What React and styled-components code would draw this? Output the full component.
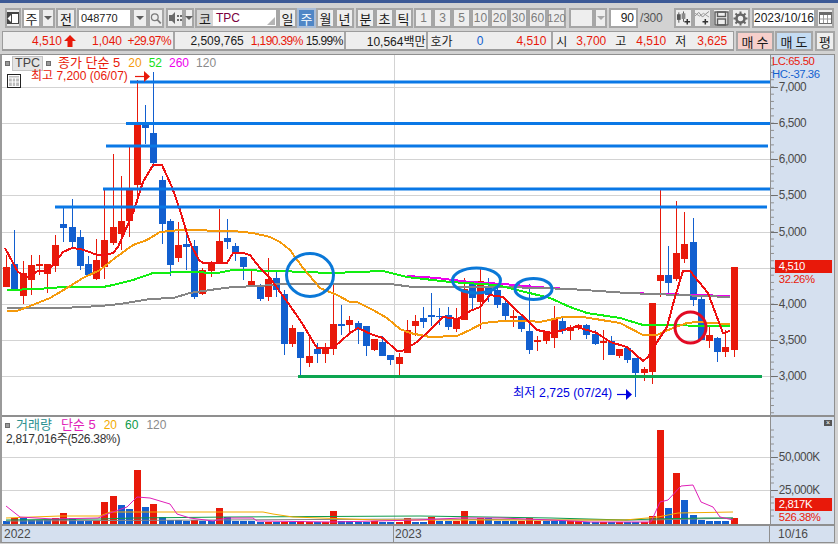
import React from 'react';
import styled, { createGlobalStyle } from 'styled-components';

const RED = '#e8190a';
const BLUE = '#125fcf';
const FONT = '"Liberation Sans", "Noto Sans CJK KR", sans-serif';

const GlobalStyle = createGlobalStyle`
  html, body { margin: 0; padding: 0; background: #d2d2d2; }
  body { font-family: ${FONT}; font-size: 12px; color: #222; }
`;

const Screen = styled.div`
  width: 838px;
  height: 544px;
  overflow: hidden;
  background: #d2d2d2;
  display: flex;
  flex-direction: column;
`;

const TitleStripe = styled.div`
  height: 3px;
  background: #3d5a96;
`;

const Toolbar = styled.div`
  display: flex;
  align-items: stretch;
  height: 20px;
  margin-top: 5px;
  padding-left: 2px;
`;

const ToolButton = styled.div`
  box-sizing: border-box;
  width: ${(p) => p.$w}px;
  margin-left: ${(p) => p.$ml || 0}px;
  display: flex;
  align-items: center;
  justify-content: ${(p) => p.$align || 'center'};
  border: 2px solid ${(p) => (p.$active ? '#a9bcd6' : '#a6a6a6')};
  background: ${(p) => (p.$active ? '#4f86c6' : p.$white ? '#fff' : '#eeeeee')};
  color: ${(p) => (p.$active ? '#fff' : p.$dim ? '#7c7c7c' : '#1a1a1a')};
  font-size: ${(p) => p.$size || 13}px;
  padding: ${(p) => p.$pad || '0'};
  position: relative;
  white-space: nowrap;
`;

const CodeBadge = styled.span`
  width: 16px;
  height: 16px;
  background: #d6d6d6;
  display: flex;
  align-items: center;
  justify-content: center;
  font-size: 13px;
`;

const StockName = styled.span`
  color: #7a0040;
  font-size: 12px;
  margin-left: 3px;
`;

const Corner = styled.span`
  position: absolute;
  right: 1px;
  bottom: 1px;
  width: 0;
  height: 0;
  border-left: 8px solid transparent;
  border-bottom: 8px solid #b5b5b5;
`;

const Caret = styled.span`
  width: 0;
  height: 0;
  border-left: 4px solid transparent;
  border-right: 4px solid transparent;
  border-top: 4px solid ${(p) => p.$color || '#5c5c5c'};
`;

const CountText = styled.span`
  width: 26px;
  margin-left: 2px;
  align-self: center;
  font-size: 12px;
  color: #555;
  letter-spacing: -0.2px;
`;

const InfoBar = styled.div`
  display: flex;
  height: 20px;
  margin-top: 3px;
  padding-left: 2px;
`;

const InfoGroup = styled.div`
  box-sizing: border-box;
  display: flex;
  align-items: center;
  width: 732px;
  border: 1px solid #9c9c9c;
  border-bottom-width: 2px;
  background: #eeeeee;
`;

const InfoCell = styled.div`
  box-sizing: border-box;
  display: flex;
  align-items: center;
  height: 100%;
  width: ${(p) => p.$w}px;
  border-right: ${(p) => (p.$last ? 'none' : '2px solid #a6a6a6')};
  white-space: nowrap;
`;

const Stat = styled.span`
  display: inline-block;
  flex: none;
  width: ${(p) => p.$w}px;
  margin-left: ${(p) => p.$ml || 0}px;
  text-align: ${(p) => (p.$left ? 'left' : 'right')};
  color: ${(p) => p.$color || '#1a1a1a'};
  letter-spacing: ${(p) => (p.$tight ? '-0.6px' : '0')};
  font-size: 12px;
`;

const UpArrowIcon = styled.svg`
  margin-left: 2px;
  flex: none;
`;

const TradeButton = styled.div`
  box-sizing: border-box;
  width: ${(p) => p.$w}px;
  margin-left: ${(p) => p.$ml}px;
  display: flex;
  align-items: center;
  justify-content: center;
  gap: ${(p) => p.$gap || 0}px;
  border: 2px solid #a6a6a6;
  background: ${(p) => p.$bg};
  font-size: 13px;
  color: #1a1a1a;
`;

const ChartFrame = styled.div`
  box-sizing: border-box;
  width: 835px;
  margin-top: 3px;
  height: 489px;
  border: 1px solid #8f8f8f;
  border-left: 2px solid #9a9a9a;
  display: flex;
  flex-direction: column;
  background: #fff;
`;

const Pane = styled.div`
  position: relative;
  display: flex;
  height: ${(p) => p.$h}px;
  border-bottom: ${(p) => (p.$divider ? '2px solid #8f8f8f' : 'none')};
  flex: none;
`;

const Plot = styled.svg`
  display: block;
  width: 768px;
  height: 100%;
  flex: none;
`;

const Axis = styled.svg`
  display: block;
  flex: 1;
  height: 100%;
  background: #d5e0ef;
  border-left: 1px solid #8f8f8f;
`;

const AxisText = styled.text`
  font-family: ${FONT};
  font-size: ${(p) => p.$size || 12}px;
  letter-spacing: -0.45px;
  fill: ${(p) => p.$color || '#4a4a4a'};
`;

const NoteText = styled.text`
  font-family: ${FONT};
  font-size: 12.3px;
  fill: #0000e0;
`;

const Legend = styled.div`
  position: absolute;
  left: ${(p) => p.$x}px;
  top: ${(p) => p.$y}px;
  display: flex;
  align-items: center;
  height: 14px;
  white-space: nowrap;
  font-size: 12px;
`;

const LegendItem = styled.span`
  display: block;
  line-height: 12px;
  color: ${(p) => p.$color};
  margin-left: ${(p) => p.$ml || 0}px;
  font-size: ${(p) => p.$size || 12}px;
  letter-spacing: ${(p) => p.$spacing || 0}px;
`;

const Marker = styled.span`
  width: 5px;
  height: 5px;
  background: #9a9a9a;
  border: 1px solid #6e6e6e;
  box-sizing: border-box;
  margin-left: ${(p) => p.$ml || 0}px;
`;

const NameChip = styled.span`
  box-sizing: border-box;
  width: 31px;
  height: 15px;
  margin-left: 2px;
  background: #e4e4e4;
  border: 1px solid #c4c4c4;
  display: flex;
  align-items: center;
  justify-content: center;
  color: #444;
  font-size: 12.5px;
`;

const GridToggle = styled.span`
  position: absolute;
  left: 5px;
  top: 19px;
  box-sizing: border-box;
  width: 14px;
  height: 14px;
  border: 1px solid #222;
  display: flex;
  align-items: center;
  justify-content: center;
  background: #fff;
`;

const CloseBox = styled.span`
  position: absolute;
  right: 2px;
  top: 3px;
  width: 8px;
  height: 6px;
  background: #555;
  color: #fff;
  font-size: 7px;
  line-height: 6px;
  text-align: center;
`;

const DateRow = styled.div`
  display: flex;
  flex: 1;
  align-items: center;
  background: #d5e0ef;
  border-top: 2px solid #8f8f8f;
  color: #4a4a4a;
  font-size: 12px;
`;

const DateLabel = styled.span`
  box-sizing: border-box;
  width: ${(p) => p.$w}px;
  height: 100%;
  display: flex;
  align-items: center;
  padding-left: ${(p) => p.$pad}px;
  border-right: ${(p) => (p.$edge ? '1px solid #8f8f8f' : 'none')};
`;

// 90 weekly candles, page pixel coords: [colour, body top, body bottom, wick top, wick bottom]
const CANDLES = [
  ['r', 267, 287, 255, 287], ['b', 264, 289, 230, 289], ['r', 273, 296, 261, 304], ['r', 265, 280, 255, 295],
  ['r', 264, 266, 255, 275], ['r', 264, 274, 264, 293], ['r', 245, 266, 235, 272], ['b', 224, 228, 206, 242],
  ['b', 227, 242, 199, 247], ['b', 237, 266, 230, 270], ['b', 264, 275, 256, 276], ['r', 260, 279, 239, 280],
  ['r', 240, 267, 190, 279], ['r', 227, 243, 154, 245], ['r', 221, 234, 176, 250], ['r', 190, 221, 147, 237],
  ['r', 125, 185, 80, 203], ['b', 125, 128, 105, 144], ['b', 133, 163, 72, 167], ['b', 180, 224, 176, 244],
  ['b', 221, 265, 219, 276], ['r', 245, 258, 222, 262], ['b', 244, 247, 234, 270], ['b', 246, 297, 240, 299],
  ['r', 270, 294, 268, 295], ['r', 262, 271, 261, 277], ['r', 241, 262, 209, 263], ['b', 238, 242, 219, 249],
  ['b', 246, 254, 243, 261], ['b', 257, 267, 257, 280], ['r', 281, 286, 269, 286], ['b', 286, 299, 284, 301],
  ['r', 279, 297, 258, 301], ['b', 278, 290, 271, 297], ['b', 294, 344, 290, 355], ['r', 328, 344, 325, 347],
  ['b', 332, 358, 332, 375], ['r', 356, 363, 337, 367], ['b', 349, 354, 343, 363], ['r', 349, 354, 343, 363],
  ['r', 324, 349, 285, 355], ['b', 324, 326, 305, 335], ['r', 320, 325, 316, 334], ['b', 323, 330, 321, 344],
  ['b', 326, 346, 326, 356], ['r', 339, 350, 339, 351], ['b', 342, 356, 336, 356], ['b', 355, 360, 355, 365],
  ['r', 357, 364, 353, 375], ['r', 330, 353, 320, 353], ['r', 321, 326, 315, 336], ['b', 318, 322, 307, 328],
  ['b', 315, 317, 293, 326], ['b', 316, 317, 308, 325], ['b', 315, 327, 307, 330], ['r', 319, 329, 308, 332],
  ['r', 289, 320, 278, 320], ['b', 284, 298, 284, 310], ['r', 281, 302, 269, 329], ['b', 286, 295, 278, 302],
  ['b', 290, 305, 285, 308], ['b', 303, 316, 300, 321], ['r', 316, 318, 310, 327], ['b', 316, 329, 314, 332],
  ['b', 331, 350, 284, 354], ['r', 340, 342, 336, 351], ['r', 331, 341, 331, 344], ['r', 319, 338, 306, 348],
  ['b', 321, 331, 316, 334], ['r', 327, 331, 325, 340], ['r', 325, 327, 324, 330], ['b', 325, 335, 324, 339],
  ['b', 334, 344, 330, 345], ['r', 341, 343, 330, 360], ['b', 341, 355, 336, 355], ['r', 349, 356, 349, 358],
  ['b', 348, 360, 346, 363], ['b', 358, 373, 358, 397], ['r', 369, 373, 367, 381], ['r', 303, 372, 303, 384],
  ['r', 275, 281, 190, 297], ['b', 275, 283, 246, 293], ['r', 253, 279, 201, 281], ['r', 244, 259, 212, 263],
  ['b', 242, 300, 218, 306], ['b', 299, 340, 294, 340], ['r', 335, 341, 325, 348], ['b', 338, 352, 337, 362],
  ['r', 347, 352, 330, 357], ['r', 267, 350, 267, 357],
];

// volume bars by candle index: [colour, top y]
const VOLUME = {
  0: ['b', 521], 1: ['r', 518], 2: ['b', 518], 3: ['b', 520], 4: ['b', 520], 5: ['b', 520], 6: ['r', 518],
  7: ['r', 513], 8: ['b', 518], 9: ['b', 521], 10: ['b', 521], 11: ['r', 521], 12: ['r', 502], 13: ['r', 496],
  14: ['b', 505], 15: ['b', 509], 16: ['r', 470], 17: ['b', 507], 18: ['r', 504], 19: ['b', 517], 20: ['b', 520],
  21: ['b', 520], 22: ['b', 521], 23: ['r', 520], 24: ['b', 521], 25: ['b', 521], 26: ['r', 508], 27: ['b', 517],
  28: ['b', 521], 29: ['b', 521], 30: ['b', 521], 31: ['b', 522], 32: ['r', 522], 33: ['b', 522], 34: ['r', 522],
  35: ['b', 522], 36: ['r', 521], 37: ['r', 522], 38: ['b', 522], 39: ['r', 522], 40: ['r', 511], 41: ['b', 521],
  42: ['b', 521], 43: ['b', 522], 44: ['b', 522], 45: ['r', 521], 46: ['b', 522], 47: ['b', 522], 48: ['r', 522],
  49: ['r', 518], 50: ['b', 522], 51: ['b', 522], 52: ['r', 517], 53: ['b', 521], 54: ['b', 521], 55: ['r', 521],
  56: ['r', 511], 57: ['b', 521], 58: ['r', 518], 59: ['b', 518], 60: ['b', 521], 61: ['b', 521], 62: ['b', 521],
  63: ['r', 521], 64: ['r', 518], 65: ['r', 521], 66: ['b', 521], 67: ['b', 521], 68: ['b', 521], 69: ['r', 521],
  70: ['r', 521], 71: ['b', 522], 72: ['b', 522], 73: ['r', 522], 74: ['b', 522], 75: ['r', 522], 76: ['b', 522],
  77: ['b', 522], 78: ['r', 522], 79: ['r', 516], 80: ['r', 430], 81: ['b', 508], 82: ['r', 473], 83: ['b', 500],
  84: ['b', 515], 85: ['b', 520], 86: ['b', 521], 87: ['b', 521], 88: ['b', 521], 89: ['r', 518],
};

const MA5 = '5,248 13,263 18,272 28,277 38,271 47,271 55,263 63,252 72,248 80,249 87,251 97,255 105,255 113,253 118,247 133,213 143,182 153,165 162,165 172,187 180,210 188,237 192,247 199,260 203,263 220,263 227,263 233,253 243,253 250,255 260,268 270,278 280,292 288,303 300,320 317,348 333,348 350,333 358,328 373,335 383,338 397,351 402,351 417,342 430,330 443,317 458,319 470,311 480,307 490,295 503,297 513,307 527,320 537,330 547,332 553,333 570,328 577,327 597,333 610,342 627,347 643,361 648,357 655,345 667,327 675,297 683,271 690,271 708,293 717,317 723,333 730,331';
const MA20 = '7,311 17,311 30,306 50,298 67,288 83,278 100,270 115,258 133,245 147,240 160,232 180,230 233,231 253,233 270,237 280,242 290,250 303,268 320,288 337,295 350,302 357,302 373,310 387,318 400,329 410,333 430,337 457,336 470,330 483,323 503,321 530,321 540,322 563,317 583,317 620,323 643,335 657,335 673,328 687,323 697,322 710,323 730,324';
const MA52 = '7,290 38,289 63,287 103,287 113,285 133,280 153,273 190,272 217,273 233,270 280,271 303,272 333,273 383,271 407,277 450,282 497,285 517,290 550,298 570,307 587,313 620,318 643,325 730,326';
const MA120 = '7,308 63,308 100,306 120,304 150,299 173,298 190,293 217,289 233,287 260,286 280,284 390,284 413,287 503,287 540,288 570,289 627,293 730,297';
const MA260 = '407,276 437,278 470,282 503,284 537,287 550,288 570,289 627,293 730,296';

const VOL_MA5 = '6,506 20,517 53,519 98,518 110,513 127,507 137,497 150,498 170,504 177,514 190,518 213,521 227,518 253,518 257,521 333,522 418,520 461,518 501,518 551,520 591,522 651,522 660,502 668,500 681,486 693,485 701,502 713,507 720,517 733,520';
const VOL_MA20 = '6,518 60,516 100,516 110,512 263,512 273,514 293,517 377,520 625,520 658,517 678,513 733,512';
const VOL_MA60 = '6,520 100,519 133,518 230,517 420,516 551,518 625,520 651,519 705,518 733,518';
const VOL_MA120 = '6,521 420,519 551,520 651,520 733,518';

const PRICE_GRID = [87, 123, 159, 195, 232, 268, 304, 340, 376];
const PRICE_LABELS = ['7,000', '6,500', '6,000', '5,500', '5,000', '4,500', '4,000', '3,500', '3,000'];

const candleX = (i) => Math.round(6.3 + 8.171 * i);
const priceMinorTicks = Array.from({ length: 50 }, (_, i) => 58 + i * 7.24);

const LEVELS = [
  { y: 82, from: 130, to: 770 },
  { y: 123.5, from: 126, to: 770 },
  { y: 146, from: 106, to: 768 },
  { y: 189, from: 103, to: 770 },
  { y: 207, from: 55, to: 767 },
];

const Candle = ({ i, data }) => {
  const [c, top, bottom, wickTop, wickBottom] = data;
  const x = candleX(i);
  const fill = c === 'r' ? RED : BLUE;
  return (
    <g fill={fill} shapeRendering="crispEdges">
      <rect x={x} y={wickTop} width="1" height={wickBottom - wickTop} />
      <rect x={x - 3} y={top} width="7" height={bottom - top} />
    </g>
  );
};

const PricePlot = () => (
  <Plot viewBox="2 55 768 360" preserveAspectRatio="none">
    {PRICE_GRID.map((y) => (
      <line key={y} x1="2" x2="770" y1={y + 0.5} y2={y + 0.5} stroke="#d3d3d3" strokeWidth="1" />
    ))}
    <line x1="394.5" x2="394.5" y1="55" y2="415" stroke="#d3d3d3" />
    {CANDLES.map((d, i) => (
      <Candle key={i} i={i} data={d} />
    ))}
    <g fill="none" strokeWidth="2" shapeRendering="crispEdges">
      <polyline points={MA260} stroke="#ee00ee" />
      <polyline points={MA120} stroke="#858585" />
      <polyline points={MA52} stroke="#12ee12" />
      <polyline points={MA20} stroke="#f59a0c" />
      <polyline points={MA5} stroke="#ee1010" />
    </g>
    {LEVELS.map((l) => (
      <line key={l.y} x1={l.from} x2={l.to} y1={l.y} y2={l.y} stroke="#0a78e6" strokeWidth="3" />
    ))}
    <line x1="298" x2="762" y1="376.5" y2="376.5" stroke="#0ca550" strokeWidth="3" />
    <ellipse cx="310" cy="275" rx="23.5" ry="21.5" fill="none" stroke="#0a78d8" strokeWidth="3" />
    <ellipse cx="476.5" cy="280.5" rx="24" ry="12.5" fill="none" stroke="#0a78d8" strokeWidth="3" />
    <ellipse cx="533.5" cy="289" rx="18.5" ry="10.5" fill="none" stroke="#0a78d8" strokeWidth="3" />
    <circle cx="690.5" cy="327.5" r="15.5" fill="none" stroke="#e20a24" strokeWidth="3" />
    <line x1="135" x2="145" y1="76.5" y2="76.5" stroke={RED} strokeWidth="1.2" />
    <polygon points="144,71 150,76.5 144,82" fill={RED} />
    <line x1="617" x2="627" y1="394.5" y2="394.5" stroke="#0000e0" strokeWidth="1.2" />
    <polygon points="626,389 632,394.5 626,400" fill="#0000e0" />
    <NoteText x="513" y="397">최저 2,725 (07/24)</NoteText>
  </Plot>
);

const PriceAxis = () => (
  <Axis viewBox="770 55 64 360" preserveAspectRatio="none">
    {priceMinorTicks.map((y) => (
      <line key={y} x1="770" x2="773" y1={y} y2={y} stroke="#8f8f8f" />
    ))}
    {PRICE_GRID.map((y, i) =>
      i === 5 ? null : (
        <g key={y}>
          <line x1="770" x2="777" y1={y + 0.5} y2={y + 0.5} stroke="#6e6e6e" />
          <AxisText x="778" y={y + 4}>{PRICE_LABELS[i]}</AxisText>
        </g>
      ),
    )}
    <line x1="770" x2="777" y1="268.5" y2="268.5" stroke="#6e6e6e" />
    <AxisText x="771" y="65.5" $color={RED} $size={11.5}>LC:65.50</AxisText>
    <AxisText x="771" y="78.5" $color={BLUE} $size={11.5}>HC:-37.36</AxisText>
    <rect x="774" y="260" width="58" height="13" fill={RED} />
    <AxisText x="778" y="270.5" $color="#fff" $size={11.5}>4,510</AxisText>
    <AxisText x="778" y="283.5" $color={RED} $size={11.5}>32.26%</AxisText>
  </Axis>
);

const VolumePlot = () => (
  <Plot viewBox="2 417 768 107" preserveAspectRatio="none">
    <line x1="2" x2="770" y1="457.5" y2="457.5" stroke="#d3d3d3" />
    <line x1="2" x2="770" y1="490.5" y2="490.5" stroke="#d3d3d3" />
    <line x1="394.5" x2="394.5" y1="417" y2="524" stroke="#d3d3d3" />
    {Object.entries(VOLUME).map(([i, [c, top]]) => (
      <rect
        key={i}
        x={candleX(+i) - 3}
        y={top}
        width="7"
        height={524 - top}
        fill={c === 'r' ? RED : BLUE}
        shapeRendering="crispEdges"
      />
    ))}
    <polyline points={VOL_MA120} fill="none" stroke="#858585" />
    <polyline points={VOL_MA60} fill="none" stroke="#0c9a4a" />
    <polyline points={VOL_MA20} fill="none" stroke="#f2ab00" />
    <polyline points={VOL_MA5} fill="none" stroke="#e020b8" />
  </Plot>
);

const VolumeAxis = () => (
  <Axis viewBox="770 417 64 107" preserveAspectRatio="none">
    {[430, 437, 444, 451, 464, 470, 477, 483, 497, 503, 510, 516].map((y) => (
      <line key={y} x1="770" x2="773" y1={y} y2={y} stroke="#8f8f8f" />
    ))}
    <line x1="770" x2="777" y1="457.5" y2="457.5" stroke="#6e6e6e" />
    <line x1="770" x2="777" y1="490.5" y2="490.5" stroke="#6e6e6e" />
    <AxisText x="778" y="461">50,000K</AxisText>
    <AxisText x="778" y="494">25,000K</AxisText>
    <rect x="774" y="498" width="58" height="13" fill={RED} />
    <AxisText x="778" y="508.5" $color="#fff" $size={11.5}>2,817K</AxisText>
    <AxisText x="778" y="521.5" $color={RED} $size={11.5}>526.38%</AxisText>
  </Axis>
);

const PanelIcon = () => (
  <svg width="12" height="14" viewBox="0 0 12 14">
    <rect x="0" y="1" width="12" height="12" fill="#444" />
    <rect x="5" y="3" width="6" height="9" fill="#fff" />
    <polygon points="4,4 0.5,7.5 4,11" fill="#fff" />
  </svg>
);

const SearchIcon = () => (
  <svg width="15" height="15" viewBox="0 0 15 15" fill="none" stroke="#7b7b7b">
    <circle cx="6" cy="6" r="4.2" strokeWidth="1.6" />
    <line x1="9" y1="9" x2="13.5" y2="13.5" strokeWidth="2.2" />
  </svg>
);

const SpeakerIcon = () => (
  <svg width="14" height="14" viewBox="0 0 14 14" fill="#6a6a6a">
    <polygon points="1,4 4,4 7,1 7,13 4,10 1,10" />
    <rect x="9" y="4" width="2" height="2" />
    <rect x="12" y="4" width="2" height="2" />
    <rect x="9" y="8" width="2" height="2" />
    <rect x="12" y="8" width="2" height="2" />
  </svg>
);

const PlusMark = ({ x, y }) => (
  <path d={`M${x - 3} ${y}h6M${x} ${y - 3}v6`} stroke="#333" strokeWidth="1.6" fill="none" />
);

const CandleAddIcon = () => (
  <svg width="16" height="16" viewBox="0 0 16 16">
    <path d="M3 2v11M8 1v11" stroke="#555" />
    <rect x="1" y="4" width="4" height="6" fill="#555" />
    <rect x="6" y="3" width="4" height="6" fill="#8a8a8a" />
    <PlusMark x={12} y={12} />
  </svg>
);

const LineAddIcon = () => (
  <svg width="16" height="16" viewBox="0 0 16 16" fill="none">
    <polyline points="0,6 4,2 8,7 11,4 15,1" stroke="#8a8a8a" />
    <polyline points="0,3 5,6 9,3 15,7" stroke="#9a9a9a" />
    <PlusMark x={11} y={12} />
  </svg>
);

const SaveIcon = () => (
  <svg width="15" height="15" viewBox="0 0 15 15" fill="none" stroke="#5c5c5c" strokeWidth="1.4">
    <rect x="1" y="1" width="13" height="13" />
    <rect x="3.5" y="1" width="8" height="4.5" />
    <rect x="3.5" y="8" width="8" height="6" />
  </svg>
);

const GearIcon = () => (
  <svg width="15" height="15" viewBox="0 0 15 15">
    <circle cx="7.5" cy="7.5" r="4" fill="none" stroke="#666" strokeWidth="2.6" />
    <path
      d="M7.5 0.5v3M7.5 11.5v3M0.5 7.5h3M11.5 7.5h3M2.5 2.5l2.2 2.2M10.3 10.3l2.2 2.2M12.5 2.5l-2.2 2.2M4.7 10.3l-2.2 2.2"
      stroke="#666"
      strokeWidth="2"
    />
  </svg>
);

const CalendarIcon = () => (
  <svg width="13" height="12" viewBox="0 0 13 12">
    <rect x="0.5" y="0.5" width="12" height="11" fill="#fff" stroke="#6a6a6a" />
    <rect x="0" y="0" width="13" height="3" fill="#6a6a6a" />
    <path d="M4.5 3v8M8.5 3v8M1 7h11" stroke="#9a9a9a" />
  </svg>
);

const GridIcon = () => (
  <svg width="10" height="10" viewBox="0 0 10 10">
    <rect x="0" y="0" width="10" height="10" fill="#bdbdbd" />
    <path d="M3.3 2v8M6.6 2v8M0 2h10M0 6h10" stroke="#fff" />
  </svg>
);

const UpArrow = () => (
  <UpArrowIcon width="12" height="12" viewBox="0 0 12 12">
    <polygon points="6,0 12,6 8.5,6 8.5,12 3.5,12 3.5,6 0,6" fill={RED} />
  </UpArrowIcon>
);

const PERIODS = ['일', '주', '월', '년'];
const UNITS = ['분', '초', '틱'];
const MINUTES = ['1', '3', '5', '10', '20', '30', '60', '120'];

export default function App() {
  return (
    <Screen>
      <GlobalStyle />
      <TitleStripe />
      <Toolbar>
        <ToolButton $w={16} $ml={3}><PanelIcon /></ToolButton>
        <ToolButton $w={19} $ml={1} $white>주</ToolButton>
        <ToolButton $w={14}><Caret /></ToolButton>
        <ToolButton $w={20} $ml={1}>전</ToolButton>
        <ToolButton $w={55} $ml={1} $white $align="flex-start" $pad="0 0 0 2px" $size={11}>048770</ToolButton>
        <ToolButton $w={16}><Caret /></ToolButton>
        <ToolButton $w={16}><SearchIcon /></ToolButton>
        <ToolButton $w={18} $ml={2}><SpeakerIcon /></ToolButton>
        <ToolButton $w={10}><Caret /></ToolButton>
        <ToolButton $w={83} $ml={1} $white $align="flex-start">
          <CodeBadge>코</CodeBadge>
          <StockName>TPC</StockName>
          <Corner />
        </ToolButton>
        {PERIODS.map((p) => (
          <ToolButton key={p} $w={19} $active={p === '주'}>{p}</ToolButton>
        ))}
        {UNITS.map((u, i) => (
          <ToolButton key={u} $w={19} $ml={i === 0 ? 2 : 0}>{u}</ToolButton>
        ))}
        {MINUTES.map((m, i) => (
          <ToolButton key={m} $w={19} $ml={i === 0 ? 1 : 0} $dim $size={m === '120' ? 11 : 12}>{m}</ToolButton>
        ))}
        <ToolButton $w={25} $ml={3} />
        <ToolButton $w={13} $dim><Caret $color="#a8a8a8" /></ToolButton>
        <ToolButton $w={29} $ml={2} $white $align="flex-end" $pad="0 2px 0 0" $size={12}>90</ToolButton>
        <CountText>/300</CountText>
        <ToolButton $w={19} $ml={8}><CandleAddIcon /></ToolButton>
        <ToolButton $w={19}><LineAddIcon /></ToolButton>
        <ToolButton $w={19}><SaveIcon /></ToolButton>
        <ToolButton $w={19}><GearIcon /></ToolButton>
        <ToolButton $w={64} $ml={2} $white $size={12}>2023/10/16</ToolButton>
        <ToolButton $w={18}><CalendarIcon /></ToolButton>
      </Toolbar>

      <InfoBar>
        <InfoGroup>
          <InfoCell $w={172}>
            <Stat $w={59} $color={RED}>4,510</Stat>
            <UpArrow />
            <Stat $w={46} $color={RED}>1,040</Stat>
            <Stat $w={49} $color={RED} $tight>+29.97%</Stat>
          </InfoCell>
          <InfoCell $w={171}>
            <Stat $w={69}>2,509,765</Stat>
            <Stat $w={59} $color={RED} $tight>1,190.39%</Stat>
            <Stat $w={40} $tight>15.99%</Stat>
          </InfoCell>
          <InfoCell $w={83}>
            <Stat $w={80}>10,564백만</Stat>
          </InfoCell>
          <InfoCell $w={125}>
            <Stat $w={25} $ml={2} $left>호가</Stat>
            <Stat $w={28} $color={BLUE}>0</Stat>
            <Stat $w={63} $color={RED}>4,510</Stat>
          </InfoCell>
          <InfoCell $w={180} $last>
            <Stat $w={14}>시</Stat>
            <Stat $w={39} $color={RED}>3,700</Stat>
            <Stat $w={20}>고</Stat>
            <Stat $w={40} $color={RED}>4,510</Stat>
            <Stat $w={20}>저</Stat>
            <Stat $w={41} $color={RED}>3,625</Stat>
          </InfoCell>
        </InfoGroup>
        <TradeButton $w={38} $ml={2} $bg="#f6cfcb" $gap={3}><span>매</span><span>수</span></TradeButton>
        <TradeButton $w={38} $ml={1} $bg="#c5dcf2" $gap={3}><span>매</span><span>도</span></TradeButton>
        <TradeButton $w={20} $ml={2} $bg="#eeeeee">평</TradeButton>
      </InfoBar>

      <ChartFrame>
        <Pane $h={360} $divider>
          <PricePlot />
          <PriceAxis />
          <Legend $x={3} $y={1}>
            <Marker />
            <NameChip>TPC</NameChip>
            <Marker $ml={3} />
            <LegendItem $color={RED} $ml={7} $size={13}>종가 단순 5</LegendItem>
            <LegendItem $color="#f59a0c" $ml={8}>20</LegendItem>
            <LegendItem $color="#18e018" $ml={7}>52</LegendItem>
            <LegendItem $color="#ee00ee" $ml={7}>260</LegendItem>
            <LegendItem $color="#8a8a8a" $ml={7}>120</LegendItem>
          </Legend>
          <Legend $x={29} $y={14}>
            <LegendItem $color={RED}>최고 7,200 (06/07)</LegendItem>
          </Legend>
          <GridToggle><GridIcon /></GridToggle>
        </Pane>
        <Pane $h={107}>
          <VolumePlot />
          <VolumeAxis />
          <Legend $x={3} $y={1}>
            <Marker />
            <LegendItem $color="#2a9090" $ml={6} $size={13}>거래량</LegendItem>
            <LegendItem $color="#e020b8" $ml={9} $size={13}>단순 5</LegendItem>
            <LegendItem $color="#f2ab00" $ml={8}>20</LegendItem>
            <LegendItem $color="#0c9a4a" $ml={8}>60</LegendItem>
            <LegendItem $color="#8a8a8a" $ml={8}>120</LegendItem>
          </Legend>
          <Legend $x={4} $y={15}>
            <LegendItem $color="#333" $spacing={-0.3}>2,817,016주(526.38%)</LegendItem>
          </Legend>
          <CloseBox>×</CloseBox>
        </Pane>
        <DateRow>
          <DateLabel $w={392} $pad={2} $edge>2022</DateLabel>
          <DateLabel $w={376} $pad={1} $edge>2023</DateLabel>
          <DateLabel $w={64} $pad={8}>10/16</DateLabel>
        </DateRow>
      </ChartFrame>
    </Screen>
  );
}
